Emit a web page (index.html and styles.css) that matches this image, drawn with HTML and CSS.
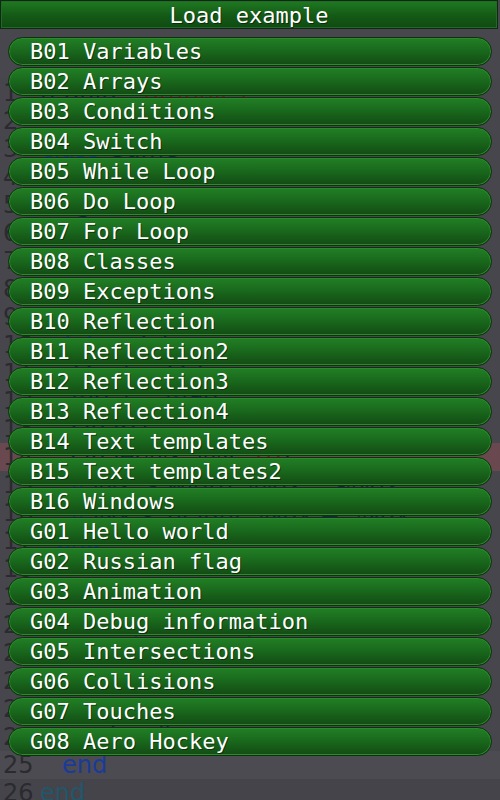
FILE: index.html
```html
<!DOCTYPE html>
<html lang="en">
<head>
    <meta charset="UTF-8">
    <meta name="viewport" content="width=device-width, initial-scale=1.0">
    <title>Load example</title>
    <link rel="stylesheet" href="styles.css">
</head>
<body>
    <div class="editor">
        <div class="line"><span class="num">1</span><span class="code">require <span class="str">"graphics"</span></span></div>
        <div class="line"><span class="num">2</span><span class="code"></span></div>
        <div class="line"><span class="num">3</span><span class="code"><span class="kw">class</span> Game</span></div>
        <div class="line"><span class="num">4</span><span class="code">  <span class="kw">def</span> init</span></div>
        <div class="line"><span class="num">5</span><span class="code">    @x = 100</span></div>
        <div class="line"><span class="num">6</span><span class="code">    @y = 100</span></div>
        <div class="line"><span class="num">7</span><span class="code">    @dx = <span class="str">4</span>, @dy = <span class="str">3</span></span></div>
        <div class="line"><span class="num">8</span><span class="code">  <span class="kw">end</span></span></div>
        <div class="line"><span class="num">9</span><span class="code"></span></div>
        <div class="line"><span class="num">10</span><span class="code">  <span class="kw">def</span> update</span></div>
        <div class="line"><span class="num">11</span><span class="code">    @x += @dx</span></div>
        <div class="line"><span class="num">12</span><span class="code">    @y += @dy</span></div>
        <div class="line"><span class="num">13</span><span class="code">    clear()</span></div>
        <div class="line err"><span class="num">14</span><span class="code">    circle(@x, @y, <span class="str">10</span>)</span></div>
        <div class="line"><span class="num">15</span><span class="code">    <span class="kw">if</span> @x &gt; width, @dx = -@dx</span></div>
        <div class="line"><span class="num">16</span><span class="code">    <span class="kw">if</span> @y &gt; height, @dy = -@dy</span></div>
        <div class="line"><span class="num">17</span><span class="code">  <span class="kw">end</span></span></div>
        <div class="line"><span class="num">18</span><span class="code"></span></div>
        <div class="line"><span class="num">19</span><span class="code">  <span class="kw">def</span> draw</span></div>
        <div class="line"><span class="num">20</span><span class="code">    color(<span class="str">255</span>, <span class="str">0</span>, <span class="str">0</span>)</span></div>
        <div class="line"><span class="num">21</span><span class="code">    text(<span class="str">"score"</span>)</span></div>
        <div class="line"><span class="num">22</span><span class="code">  <span class="kw">end</span></span></div>
        <div class="line"><span class="num">23</span><span class="code">  <span class="kw">while</span> true</span></div>
        <div class="line"><span class="num">24</span><span class="code">    update()</span></div>
        <div class="line cur"><span class="num">25</span><span class="code indent"><span class="kw">end</span></span></div>
        <div class="line"><span class="num">26</span><span class="code"><span class="kw2">end</span></span></div>
    </div>

    <div class="menu">
        <div class="menu-title">Load example</div>
        <div class="menu-list">
            <div class="item">B01 Variables</div>
            <div class="item">B02 Arrays</div>
            <div class="item">B03 Conditions</div>
            <div class="item">B04 Switch</div>
            <div class="item">B05 While Loop</div>
            <div class="item">B06 Do Loop</div>
            <div class="item">B07 For Loop</div>
            <div class="item">B08 Classes</div>
            <div class="item">B09 Exceptions</div>
            <div class="item">B10 Reflection</div>
            <div class="item">B11 Reflection2</div>
            <div class="item">B12 Reflection3</div>
            <div class="item">B13 Reflection4</div>
            <div class="item">B14 Text templates</div>
            <div class="item">B15 Text templates2</div>
            <div class="item">B16 Windows</div>
            <div class="item">G01 Hello world</div>
            <div class="item">G02 Russian flag</div>
            <div class="item">G03 Animation</div>
            <div class="item">G04 Debug information</div>
            <div class="item">G05 Intersections</div>
            <div class="item">G06 Collisions</div>
            <div class="item">G07 Touches</div>
            <div class="item">G08 Aero Hockey</div>
        </div>
    </div>
</body>
</html>
```

FILE: styles.css
```css
body {
    margin: 0;
    background: #48474e;
    font-family: "DejaVu Sans Mono", "Liberation Mono", monospace;
    height: 800px;
    overflow: hidden;
    position: relative;
}
.editor {
    padding-top: 79px;
}
.line {
    display: flex;
    height: 28px;
    line-height: 28px;
    background: #47464d;
}
.line.err {
    background: #6a4850;
}
.line.cur {
    background: #4c4b51;
}
.line:last-child {
    background: #45444b;
}
.num {
    width: 40px;
    box-sizing: border-box;
    padding-left: 3px;
    color: #2b2a2e;
    font-family: "DejaVu Sans", sans-serif;
    font-size: 24px;
}
.code {
    color: #1c1f55;
    white-space: pre;
    font-family: "DejaVu Sans", sans-serif;
    font-size: 24px;
}
.code.indent {
    padding-left: 22px;
}
.kw {
    color: #1a3a9c;
}
.kw2 {
    color: #22566a;
}
.str {
    color: #8a1418;
}

/* overlay menu */
.menu {
    position: absolute;
    top: 0;
    left: 0;
    width: 500px;
}
.menu-title {
    height: 29px;
    width: 498px;
    box-sizing: border-box;
    border: 1px solid #0f2a10;
    background: linear-gradient(#1f7a22, #145916 55%, #104a11);
    box-shadow: inset 0 0 0 1px #21682a;
    color: #fff;
    font-size: 22px;
    line-height: 28px;
    text-align: center;
    padding-top: 1px;
    text-shadow: 1px 1px 0 rgba(0, 0, 0, 0.45);
}
.menu-list {
    padding-top: 8px;
    display: flex;
    flex-direction: column;
    gap: 1px;
}
.item {
    margin-left: 8px;
    width: 484px;
    height: 29px;
    box-sizing: border-box;
    border: 1px solid #10300f;
    border-radius: 15px;
    background: linear-gradient(#217f25, #1a6a1d 45%, #124b13);
    box-shadow: inset 0 0 0 1px #2a8a2c;
    color: #fff;
    font-size: 22px;
    line-height: 28px;
    padding-left: 21px;
    text-shadow: 1px 1px 0 rgba(0, 0, 0, 0.45);
}
```
